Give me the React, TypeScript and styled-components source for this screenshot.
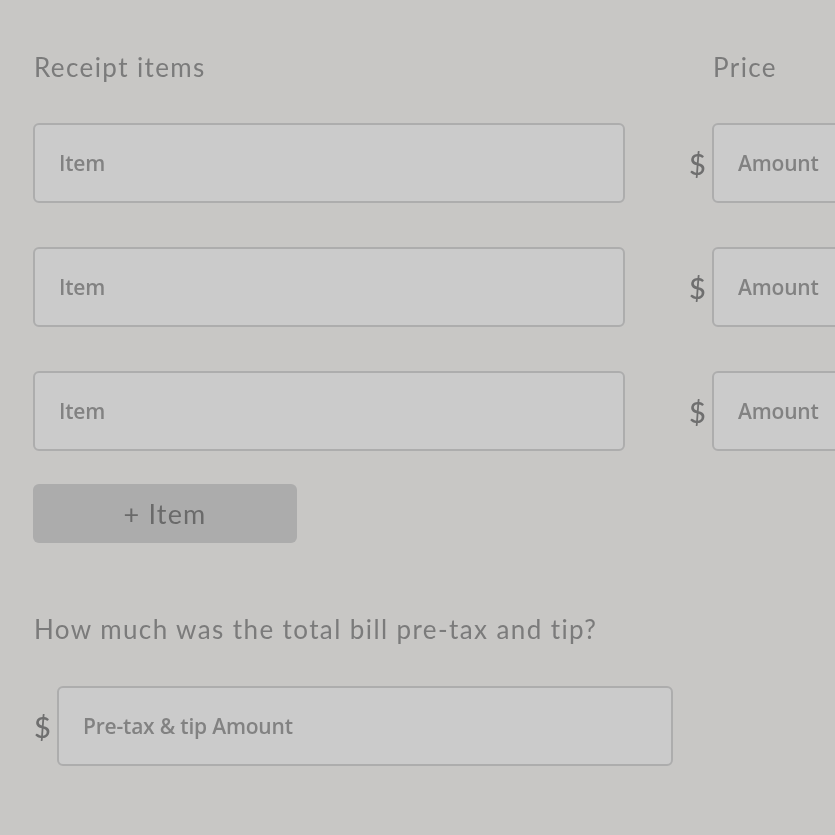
import React from "react";
import styled, { createGlobalStyle } from "styled-components";

const Global = createGlobalStyle`
  html, body { margin: 0; padding: 0; background: #c8c7c5; overflow: hidden; }
  body { width: 835px; height: 835px; }
`;

const Page = styled.div`
  box-sizing: border-box;
  width: 835px;
  height: 835px;
  padding: 50px 0 0 33px;
  font-family: "Lato", "Open Sans", sans-serif;
  color: #7a7a7a;
  filter: blur(0.6px);
  overflow: hidden;
`;

const ItemsGrid = styled.div`
  display: grid;
  grid-template-columns: 592px 200px;
  column-gap: 88px;
  row-gap: 44px;
  align-items: center;
`;

const Heading = styled.h2<{ $indent?: number }>`
  margin: 0 0 -5px ${(p) => p.$indent ?? 1}px;
  font-family: "Lato", sans-serif;
  font-weight: 400;
  font-size: 26px;
  line-height: 34px;
  color: #7b7b7b;
  letter-spacing: 1.4px;
`;

const Field = styled.div<{ $width?: number }>`
  box-sizing: border-box;
  width: ${(p) => (p.$width ? `${p.$width}px` : "100%")};
  height: 80px;
  border: 2px solid #adadad;
  border-radius: 6px;
  background: #cbcbcb;
  display: flex;
  align-items: center;
  padding-left: 24px;
  font-family: "Open Sans", sans-serif;
  font-size: 21px;
  font-weight: 600;
  color: #828282;
  letter-spacing: -0.2px;
`;

const PriceCell = styled.div`
  display: flex;
  align-items: center;
  margin-left: -24px;
  gap: 6px;
`;

const Dollar = styled.span`
  font-family: "Lato", sans-serif;
  font-size: 29px;
  font-weight: 500;
  color: #6f6f6f;
  width: 17px;
`;

const AddButton = styled.div`
  box-sizing: border-box;
  width: 264px;
  height: 59px;
  margin-top: 33px;
  border-radius: 6px;
  background: #acacac;
  display: flex;
  align-items: center;
  justify-content: center;
  font-family: "Lato", sans-serif;
  font-size: 27px;
  letter-spacing: 1.2px;
  color: #6a6a6a;
`;

const Question = styled(Heading)`
  margin-top: 69px;
  margin-bottom: 0;
`;

const TotalRow = styled.div`
  display: flex;
  align-items: center;
  gap: 6px;
  margin-top: 40px;
  margin-left: 1px;
`;

const Footer = styled.div`
  margin-top: 66px;
  font-size: 26px;
  letter-spacing: 1.4px;
  color: #7b7b7b;
`;

export default function App() {
  const rows = [0, 1, 2];
  return (
    <>
      <Global />
      <Page>
        <ItemsGrid>
          <Heading>Receipt items</Heading>
          <Heading $indent={0}>Price</Heading>
          {rows.map((r) => (
            <React.Fragment key={r}>
              <Field>Item</Field>
              <PriceCell>
                <Dollar>$</Dollar>
                <Field $width={200}>Amount</Field>
              </PriceCell>
            </React.Fragment>
          ))}
        </ItemsGrid>
        <AddButton>+ Item</AddButton>
        <Question>How much was the total bill pre-tax and tip?</Question>
        <TotalRow>
          <Dollar>$</Dollar>
          <Field $width={616}>Pre-tax &amp; tip Amount</Field>
        </TotalRow>
        <Footer>What was the tax amount?</Footer>
      </Page>
    </>
  );
}
